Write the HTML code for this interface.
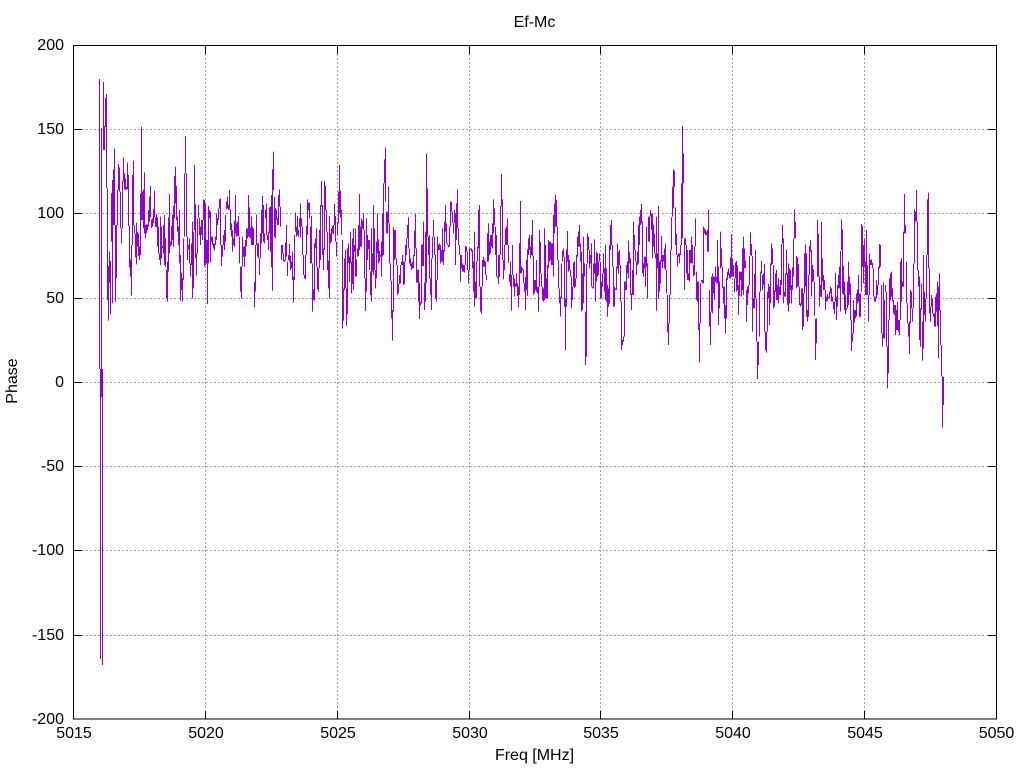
<!DOCTYPE html>
<html><head><meta charset="utf-8"><title>Ef-Mc</title>
<style>html,body{margin:0;padding:0;background:#fff}svg{display:block}text{font-family:"Liberation Sans",sans-serif;font-size:16px;fill:#000}</style></head>
<body><svg width="1024" height="768" viewBox="0 0 1024 768" xmlns="http://www.w3.org/2000/svg">
<rect width="1024" height="768" fill="#fff"/>
<path d="M74 129.5H996M74 213.5H996M74 298.5H996M74 382.5H996M74 466.5H996M74 550.5H996M74 635.5H996M205.5 46V718M337.5 46V718M469.5 46V718M600.5 46V718M732.5 46V718M864.5 46V718" fill="none" stroke="#a0a0a0" stroke-width="1" stroke-dasharray="2 2"/>
<g fill="none" stroke="#9400d3">
<path stroke-width="1" d="M99.5 79V369M100.5 369V659M101.5 128V397M102.5 369V665M103.5 82V150M104.5 126V150M105.5 98V127M106.5 94V188"/>
<g transform="translate(90.1666667 130) scale(.33333333)" stroke-width="3.01"><path d="M52 175V510M55 408V572M58 365V458M61 393V553M64 190V335M67 150V520M70 118V285M73 55V285M76 285V515M79 285V445M82 180V285M85 102V180M88 112V185M91 185V295M94 295V340M97 152V295M100 82V155M103 130V178M106 145V180M109 170V178M112 97V178M115 135V288M118 288V412M121 388V440M124 345V497M127 135V345M130 92V285M133 285V310M136 310V382M139 278V403M142 305V350M145 310V378M148 350V390M151 190V375M154 -10V270M157 185V270M160 178V295M163 127V310M166 285V325M169 283V310M172 283V300M175 240V290M178 200V275M181 168V262M184 268V293M187 265V290M190 237V280M193 182V262M196 262V290M199 252V292M202 262V350M205 290V370M208 370V390M211 260V405M214 290V385M217 348V355M220 285V370M223 255V405M226 325V410M229 420V505M232 395V515M235 262V425M238 192V370M241 335V350M244 288V345M247 255V330M250 228V350M253 138V265M256 110V220M259 168V270M262 260V305M265 290V345M268 240V400M271 375V512M274 428V480M277 445V515M280 325V450M283 130V320M286 18V130M289 130V320M292 320V390M295 345V358M298 325V400M301 400V440M304 340V405M307 275V505M310 305V475M313 105V300M316 222V385M319 370V437M322 265V370M325 225V262M328 262V315M331 290V345M334 270V315M337 270V330M340 208V270M343 210V410M346 222V405M349 330V400M352 330V522M355 228V400M358 240V265M361 245V398M364 320V335M367 320V345M370 340V355M373 342V362M376 320V345M379 250V330M382 265V285M385 235V270M388 208V235M391 205V345M394 345V408M397 345V380M400 315V345M403 300V360M406 255V335M409 215V238M412 200V235M415 225V240M418 180V238M421 238V300M424 280V320M427 300V365M430 325V345M433 272V350M436 195V310M439 280V320M442 275V318M445 258V320M448 320V400M451 410V485M454 410V505M457 320V410M460 350V380M463 350V410M466 330V380M469 295V350M472 295V325M475 195V320M478 232V322M481 292V325M484 260V345M487 290V345M490 295V345M493 455V532M496 345V485M499 253V345M502 340V380M505 340V385M508 385V435M511 310V385M514 240V340M517 198V310M520 225V335M523 310V340M526 240V265M529 220V315M532 315V330M535 305V360M538 232V310M541 230V365M544 195V412M547 118V482M550 65V180M553 200V320M556 235V325M559 240V270M562 265V285M565 195V285M568 178V230M571 230V290M574 345V390M577 345V370M580 370V395M583 390V395M586 338V392M589 285V380M592 395V438M595 375V390M598 342V395M601 378V420M604 395V415M607 365V450M610 440V518M613 315V450M616 248V305M619 290V320M622 258V315M625 300V320M628 265V290M631 220V322M634 265V290M637 290V375M640 375V435M643 435V445M646 375V448M649 288V375M652 208V315M655 218V240M658 218V265"/></g>
<g transform="translate(300.5 130) scale(.33333333)" stroke-width="3.01"><path d="M30 290V400M33 258V400M36 400V545M39 478V510M42 340V512M45 325V355M48 295V410M51 410V478M54 415V485M57 300V415M60 225V390M63 153V230M66 225V375M69 355V420M72 153V360M75 168V240M78 240V305M81 305V420M84 392V475M87 258V505M90 310V340M93 295V335M96 288V310M99 285V312M102 222V285M105 258V335M108 335V380M111 275V315M114 185V280M117 105V250M120 182V262M123 240V315M126 330V595M129 475V572M132 385V480M135 360V475M138 475V587M141 355V552M144 340V400M147 380V455M150 305V400M153 395V490M156 325V462M159 295V480M162 345V365M165 295V440M168 388V440M171 355V380M174 285V378M177 192V360"/></g>
<g transform="translate(300.1666667 130) scale(.33333333)" stroke-width="3.01"><path d="M181 290V350M184 265V350M187 272V295M190 250V300M193 300V445M196 445V543M199 265V485M202 315V390M205 330V358M208 330V420M211 425V495M214 295V515M217 370V425M220 225V435M223 295V420M226 420V475M229 335V445M232 250V370M235 328V400M238 362V395M241 375V380M244 335V440M247 250V380M250 160V375M253 88V160M256 52V215M259 245V310M262 245V310M265 170V280M268 280V400M271 400V452M274 452V565M277 540V632M280 292V545M283 300V390M286 300V385M289 385V405M292 405V495M295 462V490M298 435V462M301 405V460M304 395V405M307 375V405M310 395V465M313 395V462M316 345V395M319 325V375M322 285V325M325 262V355M328 355V400M331 385V408M334 400V420M337 395V415M340 375V415M343 302V378M346 252V355M349 355V458M352 420V458M355 418V515M358 458V567M361 515V527M364 345V520M367 342V408M370 275V408M373 458V540M376 305V515M379 70V458M382 175V320M385 320V375M388 315V445M391 445V495M394 385V540M397 320V385M400 270V320M403 320V375M406 375V505M409 450V515M412 320V450M415 345V360M418 340V360M421 345V400M424 360V395M427 295V395M430 360V405M433 275V365M436 225V305M439 280V340M442 340V345M445 345V352M448 290V350M451 215V290M454 215V245M457 245V280M460 280V310M463 240V280M466 250V405M469 220V330M472 178V295M475 295V345M478 345V375M481 375V455M484 375V415M487 400V425M490 405V425M493 405V428M496 348V405M499 350V365M502 365V420M505 420V460M508 355V420M511 355V360M514 355V365M517 360V415M520 395V485M523 305V530M526 455V505M529 395V505M532 350V395M535 240V355M538 225V470M541 470V545M544 470V552M547 390V470M550 380V410M553 390V410M556 395V435M559 435V450M562 310V395M565 280V395M568 335V375M571 315V370M574 315V350M577 280V355M580 208V310M583 235V285M586 290V375M589 315V440M592 440V445M595 375V462M598 375V440M601 228V375M604 132V230M607 208V390M610 390V448M613 345V420M616 295V345M619 290V345M622 265V345M625 345V398M628 432V455M631 395V470M634 435V542M637 345V435M640 435V470M643 445V500M646 460V470M649 430V470M652 460V498M655 470V532M658 340V495"/></g>
<g transform="translate(510.500 130) scale(.33333333)" stroke-width="3.01"><path d="M30 213V430M33 410V430M36 415V420M39 418V460M42 460V485M45 440V540M48 390V480M51 358V498M54 325V375M57 315V360M60 350V385M63 315V375M66 270V378M69 378V495M72 450V490M75 450V480M78 390V485M81 470V490M84 470V545M87 300V470M90 335V430M93 430V470M96 470V510M99 475V515M102 295V510M105 345V505M108 445V505M111 405V505M114 330V415M117 335V395M120 335V390M123 340V405M126 340V405M129 255V440M132 220V310M135 195V290M138 210V290M141 290V390M144 390V475M147 475V520M150 500V560M153 400V505M156 362V395M159 355V380M162 380V530M165 505V660M168 358V530M171 303V395M174 375V425M177 390V420M180 420V440M183 440V535M186 470V510M189 397V470M192 395V475M195 445V470M198 375V445M201 320V380M204 305V350M207 285V350M210 340V395M213 365V545M216 430V540M219 320V520M222 400V440M225 545V705M228 402V680M231 310V400M234 320V360M237 360V415M240 375V400M243 340V470M246 470V475M249 400V475M252 328V430M255 400V515M258 365V455M261 370V440M264 395V435M267 370V395M270 395V505M273 455V505M276 430V470M279 370V430M282 415V485M285 345V510M288 415V515M291 465V560M294 475V530M297 345V520M300 285V360M303 270V345M306 345V410M309 410V530M312 470V530M315 475V480M318 410V480M321 340V415M324 365V430M327 360V405M330 405V515M333 515V660M336 630V645M339 620V635M342 455V620M345 455V480M348 405V480M351 395V430M354 332V445M357 365V400M360 385V495M363 490V540M366 420V495M369 275V495M372 315V360M375 360V395M378 395V435M381 365V405M384 285V400M387 260V345M390 240V285M393 222V280M396 275V430M399 400V440M402 380V415M405 380V470M408 290V410M411 400V505M414 260V335M417 260V335M420 240V260M423 250V300M426 250V385M429 285V350M432 310V370M435 370V385M438 260V542M441 370V415M444 228V505M447 395V485M450 390V460M453 318V395M456 375V415M459 375V395M462 355V415M465 340V420M468 420V490M471 495V607M474 580V645M477 495V580M480 360V495M483 262V360M486 170V260M489 118V235M492 122V170M495 232V345M498 310V375M501 375V410M504 370V380M507 370V400M510 345V375M513 160V345M516 -12V325M519 70V160M522 325V480M525 325V345M528 345V430M531 360V450M534 430V450M537 360V455M540 360V400M543 320V400M546 345V400M549 405V440M552 350V435M555 265V350M558 425V510M561 455V515M564 455V600M567 580V698M570 460V580M573 450V455M576 450V460M579 290V460M582 295V310M585 300V315M588 305V315M591 300V365M594 240V365M597 480V590M600 545V645M603 440V545M606 430V550M609 440V490M612 440V510M615 410V455M618 440V460M621 330V460M624 410V585M627 455V535M630 305V415M633 355V410M636 410V475M639 470V520M642 470V565M645 525V610M648 445V565M651 425V450M654 415V435M657 430V445"/></g>
<g transform="translate(720.500 170) scale(.33333333)" stroke-width="3.01"><path d="M30 262V325M33 193V320M36 265V320M39 285V320M42 325V368M45 278V325M48 273V365M51 285V360M54 345V435M57 305V378M60 305V330M63 305V380M66 235V360M69 200V375M72 235V295M75 272V295M78 360V455M81 350V405M84 345V370M87 258V345M90 187V255M93 222V258M96 258V485M99 385V415M102 312V415M105 240V385M108 385V515M111 515V627M114 515V585M117 365V500M120 305V365M123 273V310M126 315V360M129 310V345M132 282V485M135 485V540M138 485V548M141 365V485M144 342V385M147 350V465M150 280V400M153 220V285M156 235V282M159 285V415M162 360V410M165 310V365M168 300V390M171 345V390M174 325V400M177 350V375M180 330V375M183 222V345M186 165V220M189 205V400M192 365V380M195 310V380M198 238V315M201 310V405M204 280V425M207 295V400M210 300V360M213 345V400M216 292V360M219 205V320M222 118V205M225 155V205M228 258V355M231 262V350M234 282V350M237 350V405M240 400V410M243 355V405M246 355V480M249 370V470M252 250V370M255 223V350M258 250V440M261 420V455M264 315V440M267 228V315M270 210V245M273 240V380M276 285V335M279 298V335M282 335V437M285 447V570M288 445V520M291 150V320M294 192V320M297 320V410M300 345V380M303 155V382M306 265V335M309 315V360M312 330V360M315 360V420M318 380V395M321 372V392M324 380V385M327 365V385M330 350V370M333 355V395M336 380V395M339 395V418M342 395V432M345 308V395M348 380V450M351 345V410M354 315V355M357 290V355M360 243V425M363 148V240M366 178V370M369 288V375M372 335V420M375 375V432M378 415V420M381 335V415M384 275V405M387 320V375M390 340V450M393 450V543M396 490V515M399 390V490M402 420V458M405 420V445M408 370V440M411 358V400M414 315V395M417 372V442M420 370V440M423 162V365M426 168V290M429 225V340M432 205V290M435 275V375M438 180V375M441 285V375M444 375V455M447 250V375M450 270V285M453 268V285M456 278V295M459 295V380M462 380V395M465 380V395M468 330V385M471 345V375M474 290V345M477 222V295M480 225V290M483 345V490M486 490V530M489 337V505M492 390V505M495 345V365M498 365V530M501 530V655M504 450V610M507 325V450M510 310V390M513 305V380M516 355V395M519 390V430M522 405V435M525 405V495M528 420V480M531 395V480M534 450V485M537 450V495M540 275V450M543 265V395M546 335V350M549 185V350M552 72V190M555 165V190M558 275V400M561 400V460M564 460V500M567 455V552M570 360V460M573 365V415M576 415V455M579 280V415M582 118V280M585 125V155M588 60V155M591 155V300M594 300V350M597 320V510M600 415V530M603 340V420M606 455V572M609 255V535M612 365V435M615 385V455M618 255V385M621 88V255M624 68V295M627 295V430M630 410V455M633 375V410M636 385V430M639 430V440M642 430V470M645 380V470M648 370V425M651 335V468M654 350V565M657 310V420M660 420V525M663 525V620M666 620V773M669 620V705"/></g>
</g>
<path d="M73.5 45.5H996.5V719H73.5ZM74 129.5H82M988 129.5H996M74 213.5H82M988 213.5H996M74 298.5H82M988 298.5H996M74 382.5H82M988 382.5H996M74 466.5H82M988 466.5H996M74 550.5H82M988 550.5H996M74 635.5H82M988 635.5H996M205.5 46V54M205.5 711V719M337.5 46V54M337.5 711V719M469.5 46V54M469.5 711V719M600.5 46V54M600.5 711V719M732.5 46V54M732.5 711V719M864.5 46V54M864.5 711V719" fill="none" stroke="#000" stroke-width="1" shape-rendering="crispEdges"/>
<g text-anchor="end">
<text x="64" y="50">200</text><text x="64" y="134">150</text><text x="64" y="218">100</text><text x="64" y="303">50</text><text x="64" y="387">0</text><text x="64" y="471">-50</text><text x="64" y="555">-100</text><text x="64" y="640">-150</text><text x="64" y="724">-200</text>
</g>
<g text-anchor="middle">
<text x="74" y="738">5015</text><text x="206" y="738">5020</text><text x="338" y="738">5025</text><text x="470" y="738">5030</text><text x="601" y="738">5035</text><text x="733" y="738">5040</text><text x="865" y="738">5045</text><text x="996.500" y="738">5050</text>
<text x="534.500" y="27">Ef-Mc</text>
<text x="534.500" y="760">Freq [MHz]</text>
<text transform="translate(17 381) rotate(-90)">Phase</text>
</g>
</svg></body></html>
